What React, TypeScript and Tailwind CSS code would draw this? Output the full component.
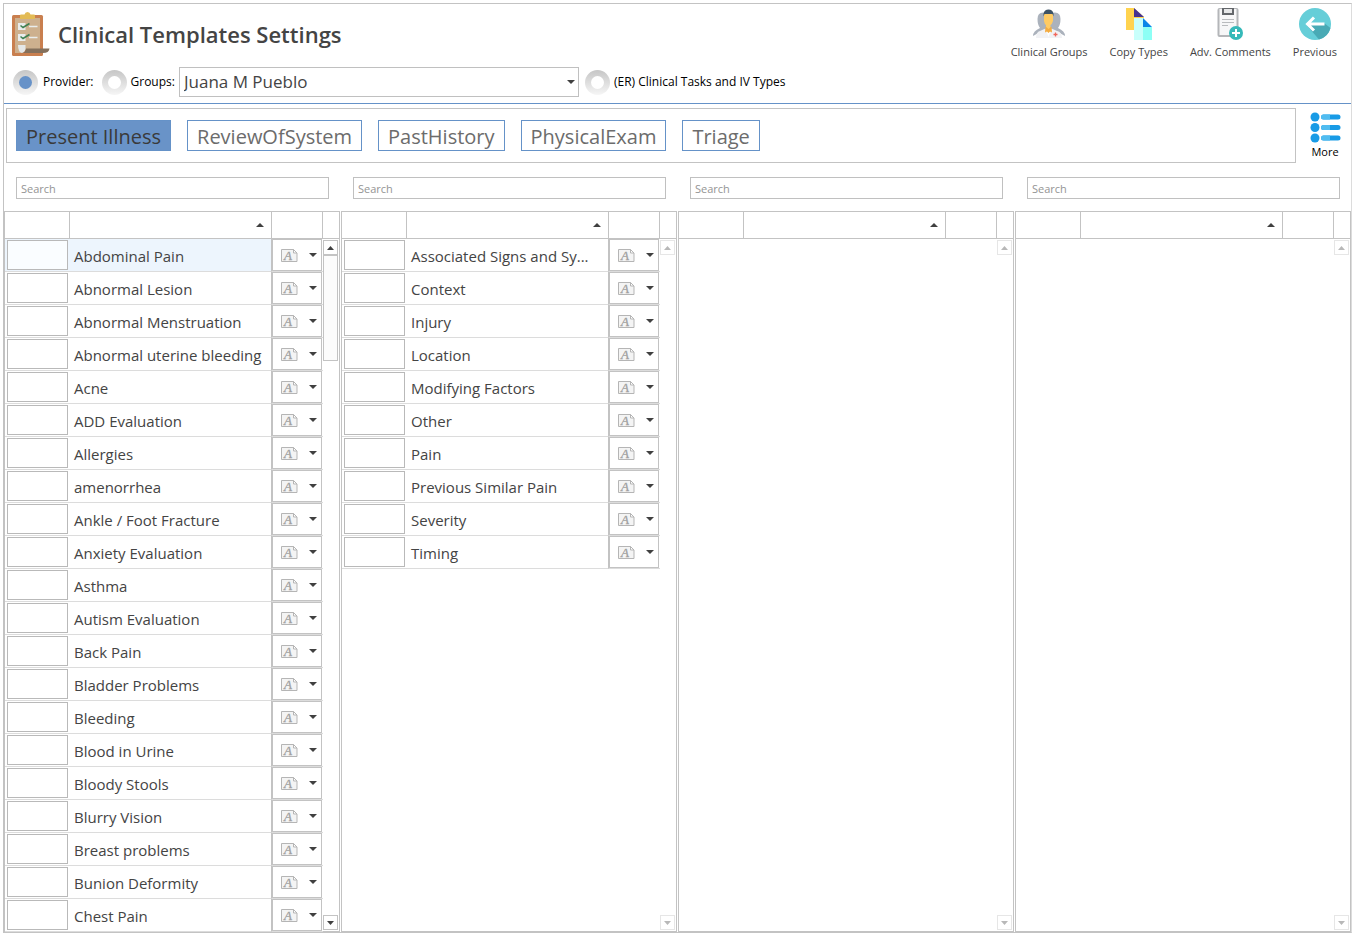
import React, { useState } from 'react';

type PanelProps = {
  name: string;
  rows: string[];
  selected?: string;
  scrollable?: boolean;
};

const TABS = ['Present Illness', 'ReviewOfSystem', 'PastHistory', 'PhysicalExam', 'Triage'];

const COMPLAINTS = [
  'Abdominal Pain', 'Abnormal Lesion', 'Abnormal Menstruation', 'Abnormal uterine bleeding', 'Acne',
  'ADD Evaluation', 'Allergies', 'amenorrhea', 'Ankle / Foot Fracture', 'Anxiety Evaluation', 'Asthma',
  'Autism Evaluation', 'Back Pain', 'Bladder Problems', 'Bleeding', 'Blood in Urine', 'Bloody Stools',
  'Blurry Vision', 'Breast problems', 'Bunion Deformity', 'Chest Pain',
];

const SECTIONS = [
  'Associated Signs and Sy...', 'Context', 'Injury', 'Location', 'Modifying Factors', 'Other', 'Pain',
  'Previous Similar Pain', 'Severity', 'Timing',
];

const ClipboardIcon = () => (
  <svg width="38" height="46" viewBox="0 0 38 46" aria-hidden="true">
    <rect x="0" y="4" width="31" height="41" rx="1.5" fill="#c97f4f" />
    <path d="M3 7h25v32H13l-3 3H3z" fill="#cdb08e" />
    <path d="M8 8V4.500q0-1 1-1h3.500Q13 1 15.500 1t3 2.500H22q1 0 1 1V8z" fill="#e3bb55" />
    <path d="M6 12h7.500v7H6zM6 23h7.500v7H6z" fill="#e9ecec" />
    <path d="M17 15.500h8.500M17 26.500h8.500" stroke="#e9ecec" strokeWidth="1.300" />
    <path d="M8.500 14.500l2.500 2 6.500-4M8.500 25.500l2.500 2 6.500-4" stroke="#3f8051" strokeWidth="1.600" fill="none" />
    <path d="M6 34h7.500v4q-1 4-3.500 4Q6 41 6 34z" fill="#e4e7e8" />
    <path d="M10 42q3.500-.5 4-4.500h23.500Q37 42 31 42z" fill="#84705c" />
  </svg>
);

const GroupsIcon = () => (
  <svg width="32" height="32" viewBox="0 0 32 32" aria-hidden="true">
    <path d="M4.500 11Q4.500 4.500 10 4.500q4 0 5 4l1 12-8 3-8 4.500Q0 23 7 20q-2.500-3-2.500-9zM27.500 11Q27.500 4.500 22 4.500q-4 0-5 4l-1 12 8 3 8 4.500q0-5-7-8 2.500-3 2.500-9z" fill="#abb2bc" />
    <path d="M11 7q0-5 4.500-5T20 7v6q-1 3.500-2.500 4v4L16 24l-3-3v-4q-1.500-1-2-4z" fill="#ffcb63" />
    <path d="M10.500 8.500V5.500Q11.500 1.500 15.500 1.500t5 4v3L19.500 6h-8z" fill="#3d5365" />
    <path d="M3 30q0-6 4-7l5.500-2.500L15.500 29l3-8.500L24 23q5 1 5 7z" fill="#f1f2f5" />
    <path d="M12.500 18.500l3 2.500 3-2.500.5 6-2-1-1.500 1.500-1.500-1.500-2 1z" fill="#f4ac41" />
    <path d="M20.500 26.500h4M22.500 24.500v4" stroke="#f0655b" strokeWidth="1.300" />
  </svg>
);

const CopyIcon = () => (
  <svg width="26" height="32" viewBox="0 0 26 32" aria-hidden="true">
    <path d="M0 0h8l10 9v1H8v12H0z" fill="#ffd34f" />
    <path d="M8 0v9h10z" fill="#453392" />
    <path d="M8 10h9v22H8z" fill="#c8fffb" />
    <path d="M17 19h9v13h-9z" fill="#8dfff5" />
    <path d="M17 10v9h9z" fill="#0a86e8" />
  </svg>
);

const CommentsIcon = () => (
  <svg width="28" height="32" viewBox="0 0 28 32" aria-hidden="true">
    <rect x="1.500" y="0" width="21" height="29" rx="2" fill="#b4b6b9" />
    <rect x="3.500" y="1" width="17" height="26" fill="#f7f7f8" />
    <path d="M6 0h12v7H6z" fill="#64676b" />
    <path d="M8 1h8v4H8z" fill="#e6e7e8" />
    <path d="M6 11.500h12M6 14.500h12M6 17.500h6" stroke="#b9bbbe" />
    <circle cx="20" cy="25" r="7" fill="#35b9b9" />
    <path d="M16 25h8M20 21v8" stroke="#fff" strokeWidth="2" />
  </svg>
);

const PreviousIcon = () => (
  <svg width="32" height="32" viewBox="0 0 32 32" aria-hidden="true">
    <circle cx="16" cy="16" r="16" fill="#66ced8" />
    <path d="M25 15l6.500 5A16 16 0 0 1 20 31.500L8 17.500l8-1z" fill="#49aab5" />
    <path d="M25.500 16H9M15 9.500L8.500 16l6.500 6.500" fill="none" stroke="#fff" strokeWidth="3" />
  </svg>
);

const MoreIcon = () => (
  <svg width="31" height="32" viewBox="0 0 31 32" aria-hidden="true">
    {[5, 15.5, 26].map((y) => (
      <g key={y}>
        <circle cx="5" cy={y} r="4.500" fill="#189be6" />
        <rect x="11" y={y - 2.5} width="19.500" height="5" rx="2.500" fill="#189be6" />
        <path d={`M20 ${y - 2.5}h-6.500a2.500 2.500 0 0 0 0 5H20z`} fill="#50bcf0" />
      </g>
    ))}
  </svg>
);

const NoteIcon = () => (
  <svg width="17" height="13" viewBox="0 0 17 13" aria-hidden="true">
    <path d="M.5.500h12l3.500 3.500v8.500H.5z" fill="#f4f4f4" stroke="#b5b5b5" />
    <path d="M12.500.500v3.500H16z" fill="#fff" stroke="#b5b5b5" />
    <text x="3" y="11" fontSize="13" fontStyle="italic" fontFamily="Liberation Serif, serif" fill="#a0a0a0" stroke="#a0a0a0" strokeWidth="0.300">A</text>
  </svg>
);

const Arrow = ({ up = false }: { up?: boolean }) => (
  <svg width="8" height="4" viewBox="0 0 8 4" fill="currentColor" aria-hidden="true">
    <path d={up ? 'M0 4h8L4 0z' : 'M0 0h8L4 4z'} />
  </svg>
);

const ScrollArrow = ({ up = false }: { up?: boolean }) => (
  <svg width="7" height="4" viewBox="0 0 7 4" fill="currentColor" aria-hidden="true">
    <path d={up ? 'M0 4h7L3.500 0z' : 'M0 0h7L3.500 4z'} />
  </svg>
);

const ACTIONS = [
  { label: 'Clinical Groups', icon: <GroupsIcon /> },
  { label: 'Copy Types', icon: <CopyIcon /> },
  { label: 'Adv. Comments', icon: <CommentsIcon /> },
  { label: 'Previous', icon: <PreviousIcon /> },
];

const Radio = ({ id, checked, onChange }: { id: string; checked: boolean; onChange: () => void }) => (
  <span className="flex w-[25px] h-[25px] shrink-0 items-center justify-center rounded-full bg-linear-to-b from-[#c6c6c6] to-[#f6f6f6]">
    <input
      type="radio"
      id={id}
      name="scope"
      checked={checked}
      onChange={onChange}
      className="w-[13px] h-[13px] appearance-none rounded-full bg-white checked:bg-[#6792c8]"
    />
  </span>
);

function Panel({ name, rows, selected, scrollable = false }: PanelProps) {
  const scrollButton = `flex w-[15px] h-[15px] items-center justify-center border ${
    scrollable ? 'border-[#c3c3c3] text-[#404040]' : 'border-[#e6e6e6] text-[#b8b8b8]'
  }`;

  return (
    <section className="flex flex-col min-w-0">
      <input
        type="text"
        placeholder="Search"
        aria-label={`Search ${name}`}
        className="h-[22px] mt-[14px] mb-3 ml-3 mr-[11px] px-1 border border-[#c0c0c0] text-[11px] placeholder:text-[#949494]"
      />
      <div className="flex flex-1 border border-[#c3c3c3]">
        <div className="flex-1 min-w-0">
          <table className="w-full table-fixed border-separate border-spacing-0 -mb-px">
            <colgroup>
              <col className="w-[65px]" />
              <col />
              <col className="w-[51px]" />
            </colgroup>
            <thead>
              <tr className="h-[27px]">
                <th aria-label="Code" className="p-0 border-r border-b border-[#c3c3c3]" />
                <th aria-label="Name" className="p-0 border-r border-b border-[#c3c3c3]">
                  <button type="button" aria-label="Sort by name" className="flex w-full justify-end pr-[7px] text-[#404040]">
                    <Arrow up />
                  </button>
                </th>
                <th aria-label="Options" className="p-0 border-r border-b border-[#c3c3c3]" />
              </tr>
            </thead>
            <tbody>
              {rows.map((row) => (
                <tr key={row} className={`h-[33px] ${row === selected ? 'bg-[#edf5fd]' : ''}`}>
                  <td className="p-0 pl-[2px] border-b border-[#dcdcdc]">
                    <input type="text" aria-label={`${row} code`} className={`block w-[61px] h-[30px] border border-[#b9b9b9] px-1 ${row === selected ? 'bg-[#fafdff]' : 'bg-white'}`} />
                  </td>
                  <td className="p-0 pl-1 pt-[2px] border-b border-r border-b-[#dcdcdc] border-r-[#c3c3c3] text-[15px] leading-[24px] whitespace-nowrap text-[#444]">{row}</td>
                  <td className="p-0 border-b border-[#dcdcdc] bg-white">
                    <button type="button" aria-label={`${row} options`} className="flex w-[50px] h-[32px] items-center gap-[11px] pl-2 border border-[#c3c3c3] text-[#404040]">
                      <NoteIcon />
                      <Arrow />
                    </button>
                  </td>
                </tr>
              ))}
            </tbody>
          </table>
        </div>
        <div className="flex flex-col w-4 shrink-0">
          <div className="h-[27px] border-b border-[#c3c3c3]" />
          <button type="button" aria-label="Scroll up" disabled={!scrollable} className={`mt-px ${scrollButton}`}>
            <ScrollArrow up />
          </button>
          <div className="flex-1">
            {scrollable && <div className="w-[15px] h-[106px] border border-[#c3c3c3] bg-[#fcfcfc]" />}
          </div>
          <button type="button" aria-label="Scroll down" disabled={!scrollable} className={`mb-px ${scrollButton}`}>
            <ScrollArrow />
          </button>
        </div>
      </div>
    </section>
  );
}

export default function App() {
  const [scope, setScope] = useState('provider');
  const [tab, setTab] = useState(TABS[0]);

  return (
    <div className="pt-[3px] pl-[3px] pr-px bg-white font-['Open_Sans','Noto_Sans',sans-serif]">
      <main className="border border-[#c3c3c3] border-r-[#dcdcdc]">
        <header className="flex justify-between border-b border-[#6592c8]">
          <div className="pb-[6px]">
            <div className="flex h-[63px] items-center gap-2 pl-2 pb-1">
              <ClipboardIcon />
              <h1 className="text-[22px] leading-[30px] font-semibold text-[#444]">Clinical Templates Settings</h1>
            </div>
            <div className="flex h-[30px] items-center pl-[9px] text-xs text-black">
              <Radio id="provider" checked={scope === 'provider'} onChange={() => setScope('provider')} />
              <label htmlFor="provider" className="ml-[5px] mr-2">Provider:</label>
              <Radio id="groups" checked={scope === 'groups'} onChange={() => setScope('groups')} />
              <label htmlFor="groups" className="ml-1 mr-1">Groups:</label>
              <div className="relative">
                <select aria-label="Provider name" className="block w-[400px] h-[30px] appearance-none border border-[#c0c0c0] pl-1 pt-px text-[17px] text-[#444]">
                  <option>Juana M Pueblo</option>
                </select>
                <span className="absolute right-1 top-[13px] text-[#404040] pointer-events-none"><Arrow /></span>
              </div>
              <span className="w-[6px]" />
              <Radio id="tasks" checked={scope === 'tasks'} onChange={() => setScope('tasks')} />
              <label htmlFor="tasks" className="ml-1">(ER) Clinical Tasks and IV Types</label>
            </div>
          </div>
          <nav className="flex items-start gap-[22px] pt-1 pr-[14px]">
            {ACTIONS.map((action) => (
              <button key={action.label} type="button" className="flex flex-col items-center gap-1 text-[11px] leading-4 text-[#444]">
                {action.icon}
                {action.label}
              </button>
            ))}
          </nav>
        </header>

        <div className="flex pt-1 pl-[2px]">
          <div className="flex flex-1 items-center gap-4 h-[55px] pl-[9px] border border-[#c3c3c3]">
            {TABS.map((name) => (
              <button
                key={name}
                type="button"
                onClick={() => setTab(name)}
                className={`h-[31px] px-[9px] pt-[3px] border border-[#6592c8] text-[20px] leading-[26px] ${
                  tab === name ? 'bg-[#6993c8] text-[#3a3a3a]' : 'bg-white text-[#6c6c6c]'
                }`}
              >
                {name}
              </button>
            ))}
          </div>
          <button type="button" className="flex flex-col items-center w-[55px] pt-1 pl-[3px] text-[11px] leading-4 text-black">
            <MoreIcon />
            More
          </button>
        </div>

        <div className="grid grid-cols-4 gap-px">
          <Panel name="complaints" rows={COMPLAINTS} selected="Abdominal Pain" scrollable />
          <Panel name="sections" rows={SECTIONS} />
          <Panel name="items" rows={[]} />
          <Panel name="details" rows={[]} />
        </div>
      </main>
    </div>
  );
}
